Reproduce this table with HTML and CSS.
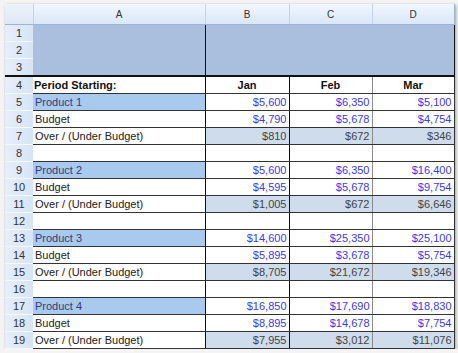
FILE: index.html
```html
<!DOCTYPE html>
<html lang="en">
<head>
  <meta charset="UTF-8">
  <title>Budget Sheet</title>
  <link rel="stylesheet" href="styles.css">
</head>
<body>
  <div class="sheet">
    <table class="grid">
      <colgroup>
        <col class="col-rh">
        <col class="col-a">
        <col class="col-b">
        <col class="col-c">
        <col class="col-d">
      </colgroup>
      <tr class="col-head">
        <th class="corner"></th>
        <th>A</th>
        <th>B</th>
        <th>C</th>
        <th>D</th>
      </tr>
      <tr>
        <th class="rh">1</th>
        <td class="banner banner-a" rowspan="3"></td>
        <td class="banner" colspan="3" rowspan="3"></td>
      </tr>
      <tr><th class="rh">2</th></tr>
      <tr><th class="rh">3</th></tr>
      <tr class="period">
        <th class="rh">4</th>
        <td class="label">Period Starting:</td>
        <td class="mid">Jan</td>
        <td class="mid">Feb</td>
        <td class="mid last">Mar</td>
      </tr>

      <tr class="product">
        <th class="rh">5</th>
        <td class="label">Product 1</td>
        <td class="num">$5,600</td><td class="num">$6,350</td><td class="num last">$5,100</td>
      </tr>
      <tr class="budget">
        <th class="rh">6</th>
        <td class="label">Budget</td>
        <td class="num">$4,790</td><td class="num">$5,678</td><td class="num last">$4,754</td>
      </tr>
      <tr class="over">
        <th class="rh">7</th>
        <td class="label">Over / (Under Budget)</td>
        <td class="num">$810</td><td class="num">$672</td><td class="num last">$346</td>
      </tr>
      <tr class="blank">
        <th class="rh">8</th>
        <td></td><td></td><td></td><td class="last"></td>
      </tr>

      <tr class="product">
        <th class="rh">9</th>
        <td class="label">Product 2</td>
        <td class="num">$5,600</td><td class="num">$6,350</td><td class="num last">$16,400</td>
      </tr>
      <tr class="budget">
        <th class="rh">10</th>
        <td class="label">Budget</td>
        <td class="num">$4,595</td><td class="num">$5,678</td><td class="num last">$9,754</td>
      </tr>
      <tr class="over">
        <th class="rh">11</th>
        <td class="label">Over / (Under Budget)</td>
        <td class="num">$1,005</td><td class="num">$672</td><td class="num last">$6,646</td>
      </tr>
      <tr class="blank">
        <th class="rh">12</th>
        <td></td><td></td><td></td><td class="last"></td>
      </tr>

      <tr class="product">
        <th class="rh">13</th>
        <td class="label">Product 3</td>
        <td class="num">$14,600</td><td class="num">$25,350</td><td class="num last">$25,100</td>
      </tr>
      <tr class="budget">
        <th class="rh">14</th>
        <td class="label">Budget</td>
        <td class="num">$5,895</td><td class="num">$3,678</td><td class="num last">$5,754</td>
      </tr>
      <tr class="over">
        <th class="rh">15</th>
        <td class="label">Over / (Under Budget)</td>
        <td class="num">$8,705</td><td class="num">$21,672</td><td class="num last">$19,346</td>
      </tr>
      <tr class="blank">
        <th class="rh">16</th>
        <td></td><td></td><td></td><td class="last"></td>
      </tr>

      <tr class="product">
        <th class="rh">17</th>
        <td class="label">Product 4</td>
        <td class="num">$16,850</td><td class="num">$17,690</td><td class="num last">$18,830</td>
      </tr>
      <tr class="budget">
        <th class="rh">18</th>
        <td class="label">Budget</td>
        <td class="num">$8,895</td><td class="num">$14,678</td><td class="num last">$7,754</td>
      </tr>
      <tr class="over">
        <th class="rh">19</th>
        <td class="label">Over / (Under Budget)</td>
        <td class="num">$7,955</td><td class="num">$3,012</td><td class="num last">$11,076</td>
      </tr>
    </table>
  </div>
</body>
</html>
```

FILE: styles.css
```css
html, body {
  margin: 0;
  background: #f4f4f4;
}
body {
  font-family: "Liberation Sans", Arial, sans-serif;
  font-size: 11px;
  color: #222;
}
.sheet {
  padding: 4px 0 0 5px;
  width: 453px;
}
.grid {
  border-collapse: collapse;
  table-layout: fixed;
  width: 449px;
  background: #fff;
  box-shadow: 1px 1px 3px rgba(0, 0, 0, 0.35);
}
.col-rh { width: 28px; }
.col-a { width: 172px; }
.col-b { width: 84px; }
.col-c { width: 83px; }
.col-d { width: 82px; }

.grid td,
.grid th {
  height: 16px;
  padding: 0 2px;
  white-space: nowrap;
  overflow: hidden;
  line-height: 15px;
}

/* column letters */
.col-head th {
  height: 20px;
  font-weight: normal;
  font-size: 10px;
  color: #333;
  text-align: center;
  background: linear-gradient(#f1f6fd, #d9e7f8);
  border-right: 1px solid #c3d4ea;
  border-bottom: 1px solid #9db5d5;
}
.col-head th:last-child {
  border-right: 1px solid #9db5d5;
}
.col-head .corner {
  background: linear-gradient(#eef3fa, #dde8f5);
}

/* row numbers */
.grid .rh {
  font-weight: normal;
  font-size: 11px;
  color: #333;
  text-align: center;
  background: linear-gradient(90deg, #e6eefa, #d6e4f6);
  border-bottom: 1px solid #f4f8fd;
  border-right: 0;
}

.banner {
  background: #a9bfdd;
}
.banner-a {
  border-right: 1px solid #111;
}

.grid tr:not(.col-head) td {
  border-bottom: 1px solid #333;
  border-right: 1px solid #111;
}
.grid tr:not(.col-head) td:nth-child(4) {
  border-right: 1px solid #8a8a8a;
}
.grid tr:not(.col-head) td.last {
  border-right: 1px solid #333;
}
.grid tr.period td,
.grid tr.period th {
  border-top: 2px solid #111;
}

.period .label {
  font-weight: bold;
  color: #111;
  padding-left: 1px;
}
.period .mid {
  font-weight: bold;
  text-align: center;
  color: #111;
}

.label {
  padding-left: 1px;
}
.num {
  text-align: right;
  color: #3a3af2;
}

.product .label {
  background: #a8caee;
  color: #3b3b72;
}
.over .num {
  background: #cfdcec;
  color: #444;
}
```
